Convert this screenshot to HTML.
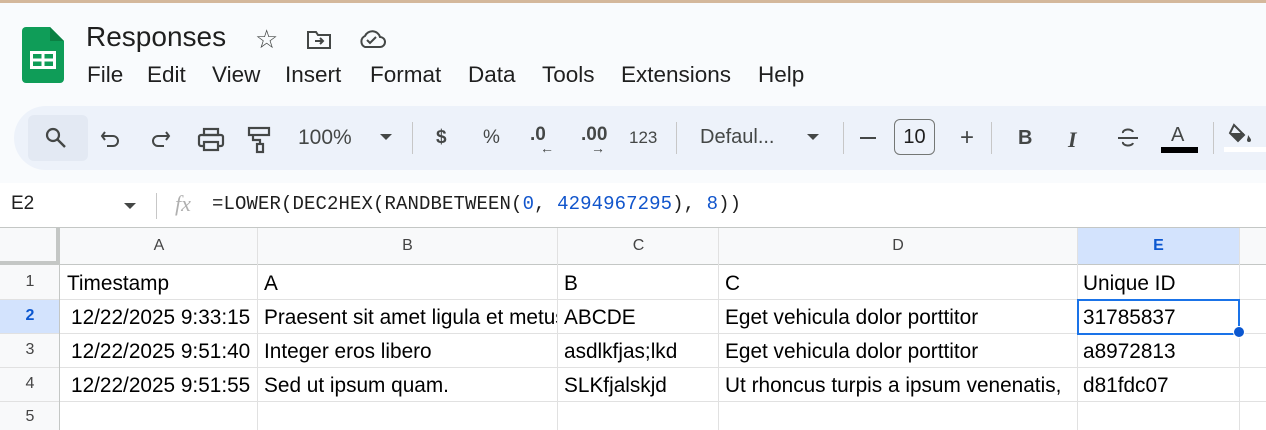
<!DOCTYPE html>
<html><head><style>
*{margin:0;padding:0;box-sizing:border-box}
body{width:1266px;height:430px;overflow:hidden;background:#f9fbfd;font-family:"Liberation Sans",Arial,sans-serif;position:relative;color:#1f1f1f}
.a{position:absolute;white-space:nowrap}
.m{position:absolute;top:62px;font-size:22.5px;color:#1f1f1f}
.tb{position:absolute;left:14px;top:106px;width:1300px;height:64px;background:#edf2fa;border-radius:32px}
.sep{position:absolute;top:122px;width:1px;height:32px;background:#c7c7c7}
.ic{position:absolute;font-size:19px;color:#444746}
.cell{position:absolute;font-size:20.8px;color:#000;white-space:nowrap;overflow:hidden}
.hl{position:absolute;background:#e1e1e1;height:1px;left:0;width:1266px}
.vl{position:absolute;background:#e1e1e1;width:1px}
.ch{position:absolute;top:237px;font-size:16px;color:#444;text-align:center}
.rh{position:absolute;left:0;width:60px;font-size:16px;color:#444;text-align:center}
</style></head><body>
<div class="a" style="left:0;top:0;width:1266px;height:3px;background:#d4b89c"></div>
<svg class="a" style="left:22px;top:27px" width="42" height="56" viewBox="0 0 42 56">
<path d="M4 0H28L42 14V52a4 4 0 0 1-4 4H4a4 4 0 0 1-4-4V4a4 4 0 0 1 4-4z" fill="#0f9d58"/>
<path d="M28 0V14H42z" fill="#0b8043"/>
<rect x="8" y="24" width="26" height="18" fill="#fff"/>
<rect x="11" y="27" width="8.5" height="4.5" fill="#0f9d58"/><rect x="22.5" y="27" width="8.5" height="4.5" fill="#0f9d58"/>
<rect x="11" y="34.5" width="8.5" height="4.5" fill="#0f9d58"/><rect x="22.5" y="34.5" width="8.5" height="4.5" fill="#0f9d58"/>
</svg>
<div class="a" style="left:86px;top:21px;font-size:28px;color:#1f1f1f">Responses</div>
<div class="a" style="left:255px;top:24px;font-size:26px;color:#444746">☆</div>
<svg class="a" style="left:306px;top:29px" width="26" height="22" viewBox="0 0 26 22"><path d="M2 3h8l2 3h12v13H2z" fill="none" stroke="#444746" stroke-width="2"/><path d="M9 12h8M14 9l3 3-3 3" fill="none" stroke="#444746" stroke-width="2"/></svg>
<svg class="a" style="left:357px;top:28px" width="30" height="22" viewBox="0 0 30 22"><path d="M8 19h15a5 5 0 0 0 0-10 8 8 0 0 0-15-1 6 6 0 0 0 0 11z" fill="none" stroke="#444746" stroke-width="2"/><path d="M10 12l3 3 6-6" fill="none" stroke="#444746" stroke-width="2"/></svg>
<div class="m" style="left:87px">File</div>
<div class="m" style="left:147px">Edit</div>
<div class="m" style="left:212px">View</div>
<div class="m" style="left:285px">Insert</div>
<div class="m" style="left:370px">Format</div>
<div class="m" style="left:468px">Data</div>
<div class="m" style="left:542px">Tools</div>
<div class="m" style="left:621px">Extensions</div>
<div class="m" style="left:758px">Help</div>
<div class="tb"></div>
<div class="a" style="left:28px;top:115px;width:60px;height:46px;background:#e3e9f3;border-radius:6px"></div>
<svg class="a" style="left:44px;top:126px" width="24" height="24" viewBox="0 0 24 24"><circle cx="9" cy="9" r="6" fill="none" stroke="#444746" stroke-width="2.2"/><path d="M13.5 13.5L21 21" stroke="#444746" stroke-width="2.4"/></svg>
<svg class="a" style="left:100px;top:128px" width="22" height="22" viewBox="0 0 22 22"><path d="M5 4L2 8l3 4" fill="none" stroke="#444746" stroke-width="2"/><path d="M2 8h11a5 5 0 0 1 0 10H7" fill="none" stroke="#444746" stroke-width="2"/></svg>
<svg class="a" style="left:149px;top:128px" width="22" height="22" viewBox="0 0 22 22"><path d="M17 4l3 4-3 4" fill="none" stroke="#444746" stroke-width="2"/><path d="M20 8H9a5 5 0 0 0 0 10h6" fill="none" stroke="#444746" stroke-width="2"/></svg>
<svg class="a" style="left:197px;top:127px" width="28" height="26" viewBox="0 0 28 26"><rect x="7" y="2" width="14" height="6" fill="none" stroke="#444746" stroke-width="2.2"/><rect x="2" y="8" width="24" height="11" rx="2" fill="none" stroke="#444746" stroke-width="2.2"/><rect x="7" y="15" width="14" height="8" fill="#edf2fa" stroke="#444746" stroke-width="2.2"/></svg>
<svg class="a" style="left:247px;top:126px" width="26" height="28" viewBox="0 0 26 28"><rect x="2" y="2" width="20" height="7" fill="none" stroke="#444746" stroke-width="2.2"/><path d="M6 9v5h7v5" fill="none" stroke="#444746" stroke-width="2.2"/><rect x="10" y="18" width="6" height="8" fill="none" stroke="#444746" stroke-width="2.2"/></svg>
<div class="a" style="left:298px;top:126px;font-size:21px;color:#444746">100%</div>
<div class="a" style="left:380px;top:134px;width:0;height:0;border-left:6px solid transparent;border-right:6px solid transparent;border-top:6px solid #444746"></div>
<div class="sep" style="left:412px"></div>
<div class="ic" style="left:436px;top:127px;font-weight:bold">$</div>
<div class="ic" style="left:483px;top:127px">%</div>
<div class="ic" style="left:530px;top:124px;font-weight:bold">.0</div>
<div class="a" style="left:540px;top:140px;font-size:14px;color:#444746">←</div>
<div class="ic" style="left:581px;top:124px;font-weight:bold">.00</div>
<div class="a" style="left:591px;top:140px;font-size:14px;color:#444746">→</div>
<div class="a" style="left:629px;top:128px;font-size:17px;color:#444746">123</div>
<div class="sep" style="left:676px"></div>
<div class="a" style="left:700px;top:126px;font-size:20px;color:#444746">Defaul...</div>
<div class="a" style="left:807px;top:134px;width:0;height:0;border-left:6px solid transparent;border-right:6px solid transparent;border-top:6px solid #444746"></div>
<div class="sep" style="left:843px"></div>
<div class="a" style="left:860px;top:137px;width:16px;height:2px;background:#444746"></div>
<div class="a" style="left:894px;top:119px;width:41px;height:36px;border:1px solid #747775;border-radius:6px;font-size:20px;color:#1f1f1f;text-align:center;line-height:34px">10</div>
<div class="a" style="left:960px;top:128px;font-size:24px;color:#444746;line-height:20px">+</div>
<div class="sep" style="left:991px"></div>
<div class="ic" style="left:1018px;top:127px;font-weight:bold;font-size:20px">B</div>
<div class="ic" style="left:1068px;top:127px;font-style:italic;font-family:'Liberation Serif',serif;font-weight:bold;font-size:22px">I</div>
<svg class="a" style="left:1116px;top:127px" width="24" height="22" viewBox="0 0 24 22"><path d="M2 11h20" stroke="#444746" stroke-width="2"/><path d="M17 5a5 3 0 0 0-10 1M7 15a5 3 0 0 0 10 1" fill="none" stroke="#444746" stroke-width="2"/></svg>
<div class="ic" style="left:1171px;top:124px;font-size:20px">A</div>
<div class="a" style="left:1161px;top:147px;width:37px;height:6px;background:#000"></div>
<div class="sep" style="left:1213px"></div>
<svg class="a" style="left:1228px;top:122px" width="30" height="24" viewBox="0 0 30 24"><path d="M6 3l10 10-6 6-8-8z" fill="none" stroke="#444746" stroke-width="2"/><path d="M2 11h14l-6 8z" fill="#444746"/><path d="M20 13c2 3 3 4 3 5a2 2 0 0 1-4 0c0-1 1-2 1-5z" fill="#444746"/></svg>
<div class="a" style="left:1224px;top:147px;width:42px;height:5px;background:#fff"></div>
<div class="a" style="left:0;top:183px;width:1266px;height:45px;background:#fff"></div>
<div class="a" style="left:11px;top:193px;font-size:19px;color:#1f1f1f">E2</div>
<div class="a" style="left:124px;top:203px;width:0;height:0;border-left:6px solid transparent;border-right:6px solid transparent;border-top:6px solid #444746"></div>
<div class="a" style="left:156px;top:193px;width:1px;height:26px;background:#c7c7c7"></div>
<div class="a" style="left:175px;top:191px;font-size:22px;color:#b0b0b0;font-style:italic;font-family:'Liberation Serif',serif">fx</div>
<div class="a" style="left:212px;top:193px;font-size:19px;font-family:'Liberation Mono',monospace;color:#1f1f1f;letter-spacing:0.1px">=LOWER(DEC2HEX(RANDBETWEEN(<span style="color:#1155cc">0</span>, <span style="color:#1155cc">4294967295</span>), <span style="color:#1155cc">8</span>))</div>
<div class="a" style="left:0;top:228px;width:1266px;height:202px;background:#fff"></div>
<div class="a" style="left:0;top:228px;width:1266px;height:37px;background:#f8f9fa"></div>
<div class="a" style="left:0;top:265px;width:60px;height:165px;background:#f8f9fa"></div>
<div class="a" style="left:0;top:228px;width:60px;height:37px;background:#f8f9fa;border-right:4px solid #c4c7c5;border-bottom:4px solid #c4c7c5"></div>
<div class="a" style="left:1077px;top:228px;width:162px;height:37px;background:#d3e3fd"></div>
<div class="a" style="left:0;top:300px;width:60px;height:34px;background:#d3e3fd"></div>
<div class="hl" style="top:227px;background:#c4c7c5"></div>
<div class="hl" style="top:264px;background:#c4c7c5"></div>
<div class="hl" style="top:299px"></div>
<div class="hl" style="top:333px"></div>
<div class="hl" style="top:367px"></div>
<div class="hl" style="top:401px"></div>
<div class="vl" style="left:59px;top:228px;height:202px;background:#c4c7c5"></div>
<div class="vl" style="left:257px;top:228px;height:202px"></div>
<div class="vl" style="left:557px;top:228px;height:202px"></div>
<div class="vl" style="left:718px;top:228px;height:202px"></div>
<div class="vl" style="left:1077px;top:228px;height:202px"></div>
<div class="vl" style="left:1239px;top:228px;height:202px"></div>
<div class="ch" style="left:60px;width:198px">A</div>
<div class="ch" style="left:258px;width:299px">B</div>
<div class="ch" style="left:558px;width:161px">C</div>
<div class="ch" style="left:719px;width:358px">D</div>
<div class="ch" style="left:1078px;width:161px;color:#0b57d0;font-weight:bold">E</div>
<div class="rh" style="top:273px">1</div>
<div class="rh" style="top:307px;color:#0b57d0;font-weight:bold">2</div>
<div class="rh" style="top:341px">3</div>
<div class="rh" style="top:375px">4</div>
<div class="rh" style="top:408px">5</div>
<div class="cell" style="left:67px;top:272px">Timestamp</div>
<div class="cell" style="left:264px;top:272px">A</div>
<div class="cell" style="left:564px;top:272px">B</div>
<div class="cell" style="left:725px;top:272px">C</div>
<div class="cell" style="left:1083px;top:272px">Unique ID</div>
<div class="cell" style="left:71px;top:306px">12/22/2025 9:33:15</div>
<div class="cell" style="left:264px;top:306px;width:293px">Praesent sit amet ligula et metus</div>
<div class="cell" style="left:564px;top:306px">ABCDE</div>
<div class="cell" style="left:725px;top:306px">Eget vehicula dolor porttitor</div>
<div class="cell" style="left:1083px;top:306px">31785837</div>
<div class="cell" style="left:71px;top:340px">12/22/2025 9:51:40</div>
<div class="cell" style="left:264px;top:340px">Integer eros libero</div>
<div class="cell" style="left:564px;top:340px">asdlkfjas;lkd</div>
<div class="cell" style="left:725px;top:340px">Eget vehicula dolor porttitor</div>
<div class="cell" style="left:1083px;top:340px">a8972813</div>
<div class="cell" style="left:71px;top:374px">12/22/2025 9:51:55</div>
<div class="cell" style="left:264px;top:374px">Sed ut ipsum quam.</div>
<div class="cell" style="left:564px;top:374px">SLKfjalskjd</div>
<div class="cell" style="left:725px;top:374px;width:352px">Ut rhoncus turpis a ipsum venenatis,</div>
<div class="cell" style="left:1083px;top:374px">d81fdc07</div>
<div class="a" style="left:1077px;top:299px;width:163px;height:36px;border:2px solid #1a73e8"></div>
<div class="a" style="left:1233px;top:326px;width:12px;height:12px;border-radius:50%;background:#0b57d0;border:1px solid #fff"></div>
</body></html>
